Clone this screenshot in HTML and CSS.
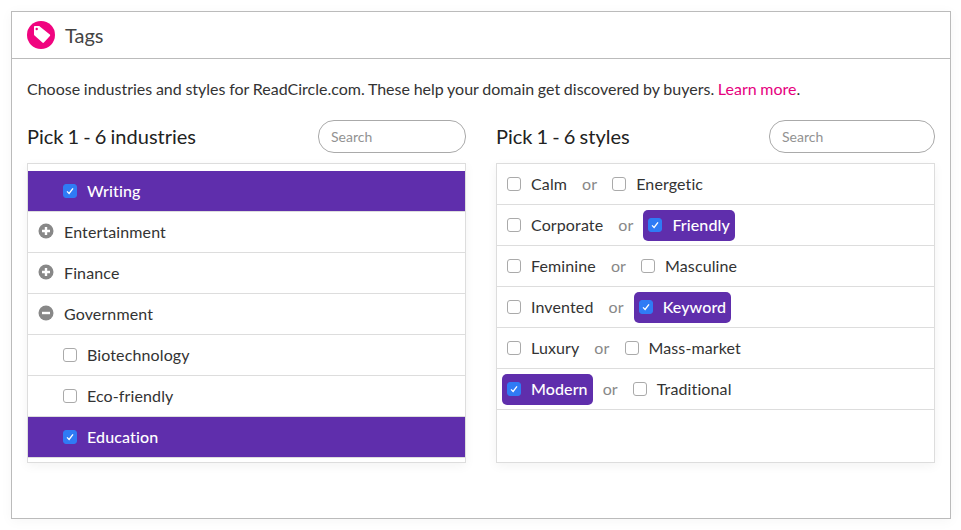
FILE: index.html
```html
<!DOCTYPE html>
<html lang="en">
<head>
<meta charset="utf-8">
<title>Tags</title>
<link rel="stylesheet" href="styles.css">
</head>
<body>
<section class="panel">
  <header class="panel-head">
    <svg class="logo" width="28" height="28" viewBox="0 0 28 28" aria-hidden="true">
      <circle cx="14" cy="14" r="14" fill="#f0047f"/>
      <path d="M7 6c0-.6.4-1 1-1h3.800c.4 0 .7.1 1 .4l10 8.200c.5.4.5 1 .1 1.500l-6 6.400c-.4.5-1.100.5-1.500.1l-7.900-7c-.3-.3-.5-.6-.5-1z" fill="#fff"/>
      <circle cx="9.700" cy="8" r="1.200" fill="#f0047f"/>
    </svg>
    <h1 class="panel-title">Tags</h1>
  </header>
  <div class="panel-body">
    <p class="intro">Choose industries and styles for ReadCircle.com. These help your domain get discovered by buyers. <a class="link" href="#">Learn more</a>.</p>
    <div class="columns">
      <div class="column">
        <div class="column-head">
          <h2 class="column-title">Pick 1 - 6 industries</h2>
          <input class="search" type="text" placeholder="Search">
        </div>
        <ul class="list list-scrolled">
          <li class="row row-selected row-child"><span class="check check-on"><svg width="12" height="12" viewBox="0 0 12 12"><path d="M3 6.400 5.100 8.500 9 3.300" fill="none" stroke="#fff" stroke-width="1.300"/></svg></span>Writing</li>
          <li class="row"><span class="toggle"><svg width="16" height="16" viewBox="0 0 16 16"><circle cx="8" cy="8" r="7.500" fill="#888"/><path d="M4 8h8M8 4v8" stroke="#fff" stroke-width="2.400"/></svg></span>Entertainment</li>
          <li class="row"><span class="toggle"><svg width="16" height="16" viewBox="0 0 16 16"><circle cx="8" cy="8" r="7.500" fill="#888"/><path d="M4 8h8M8 4v8" stroke="#fff" stroke-width="2.400"/></svg></span>Finance</li>
          <li class="row"><span class="toggle"><svg width="16" height="16" viewBox="0 0 16 16"><circle cx="8" cy="8" r="7.500" fill="#888"/><path d="M4 8h8" stroke="#fff" stroke-width="2.400"/></svg></span>Government</li>
          <li class="row row-child"><span class="check"></span>Biotechnology</li>
          <li class="row row-child"><span class="check"></span>Eco-friendly</li>
          <li class="row row-selected row-child"><span class="check check-on"><svg width="12" height="12" viewBox="0 0 12 12"><path d="M3 6.400 5.100 8.500 9 3.300" fill="none" stroke="#fff" stroke-width="1.300"/></svg></span>Education</li>
        </ul>
      </div>
      <div class="column">
        <div class="column-head">
          <h2 class="column-title">Pick 1 - 6 styles</h2>
          <input class="search search-wide" type="text" placeholder="Search">
        </div>
        <ul class="list">
          <li class="row row-pair"><span class="opt"><span class="check"></span>Calm</span><span class="or">or</span><span class="opt"><span class="check"></span>Energetic</span></li>
          <li class="row row-pair"><span class="opt"><span class="check"></span>Corporate</span><span class="or">or</span><span class="opt opt-on"><span class="check check-on"><svg width="12" height="12" viewBox="0 0 12 12"><path d="M3 6.400 5.100 8.500 9 3.300" fill="none" stroke="#fff" stroke-width="1.300"/></svg></span>Friendly</span></li>
          <li class="row row-pair"><span class="opt"><span class="check"></span>Feminine</span><span class="or">or</span><span class="opt"><span class="check"></span>Masculine</span></li>
          <li class="row row-pair"><span class="opt"><span class="check"></span>Invented</span><span class="or">or</span><span class="opt opt-on"><span class="check check-on"><svg width="12" height="12" viewBox="0 0 12 12"><path d="M3 6.400 5.100 8.500 9 3.300" fill="none" stroke="#fff" stroke-width="1.300"/></svg></span>Keyword</span></li>
          <li class="row row-pair"><span class="opt"><span class="check"></span>Luxury</span><span class="or">or</span><span class="opt"><span class="check"></span>Mass-market</span></li>
          <li class="row row-pair"><span class="opt opt-on"><span class="check check-on"><svg width="12" height="12" viewBox="0 0 12 12"><path d="M3 6.400 5.100 8.500 9 3.300" fill="none" stroke="#fff" stroke-width="1.300"/></svg></span>Modern</span><span class="or">or</span><span class="opt"><span class="check"></span>Traditional</span></li>
        </ul>
      </div>
    </div>
  </div>
</section>
</body>
</html>
```
FILE: styles.css
```css
* { box-sizing: border-box; }
html, body { height: 100%; }
body {
  margin: 0;
  padding: 11px 10px 11px 11px;
  background: #fff;
  color: #333;
  font-family: Lato, sans-serif;
  font-size: 16px;
  overflow: hidden;
}
.panel {
  height: 508px;
  background: #fff;
  border: 1px solid #bbb;
  box-shadow: 0 2px 12px rgba(0,0,0,.04);
}
.panel-head {
  display: flex;
  align-items: center;
  gap: 10px;
  height: 47px;
  padding: 0 15px;
  border-bottom: 1px solid #bbb;
}
.logo { flex: none; }
.panel-title {
  margin: 0;
  font-size: 20px;
  font-weight: 400;
  line-height: 24px;
  color: #444;
}
.panel-body { padding: 19px 15px 0; }
.intro { margin: 0; font-size: 16px; line-height: 22px; word-spacing: -.4px; }
.link { color: #e6007e; text-decoration: none; }
.columns { display: flex; gap: 30px; margin-top: 20px; }
.column { flex: 1 1 0; min-width: 0; }
.column-head {
  display: flex;
  align-items: center;
  justify-content: space-between;
  height: 33px;
  margin-bottom: 10px;
}
.column-title {
  margin: 0 0 2px;
  font-size: 20px;
  font-weight: 400;
  color: #222;
  word-spacing: -1px;
}
.search {
  width: 148px;
  height: 33px;
  padding: 0 12px;
  border: 1px solid #aaa;
  border-radius: 16px;
  font-family: Lato, sans-serif;
  font-size: 14px;
  background: #fff;
  outline: none;
}
.search-wide { width: 166px; }
.search::placeholder { color: #929292; opacity: 1; }
.list {
  height: 300px;
  margin: 0;
  padding: 0;
  list-style: none;
  overflow: hidden;
  border: 1px solid #ddd;
  box-shadow: 0 3px 10px rgba(0,0,0,.05);
  letter-spacing: .12px;
}
.list-scrolled { padding-top: 7px; }
.row {
  display: flex;
  align-items: center;
  height: 41px;
  padding: 0 0 2px 10px;
  border-bottom: 1px solid #ddd;
}
.row-child { padding-left: 35px; }
.row-selected {
  background: #5f2eac;
  color: #fff;
  font-weight: 500;
}
.row-pair { padding: 0 0 0 5px; gap: 10px; }
.toggle { display: flex; width: 16px; height: 16px; margin-right: 10px; }
.check {
  display: flex;
  align-items: center;
  justify-content: center;
  flex: none;
  width: 14px;
  height: 14px;
  margin: 2px 10px 0 0;
  background: #fff;
  border: 1px solid #aaa;
  border-radius: 3px;
}
.check-on { background: #2f7bf5; border-color: #2f7bf5; }
.opt {
  display: flex;
  align-items: center;
  height: 31px;
  padding: 0 5px 2px;
  border-radius: 5px;
}
.opt-on { background: #5f2eac; color: #fff; font-weight: 500; letter-spacing: .1px; }
.or { padding-bottom: 2px; color: #888; }
```
